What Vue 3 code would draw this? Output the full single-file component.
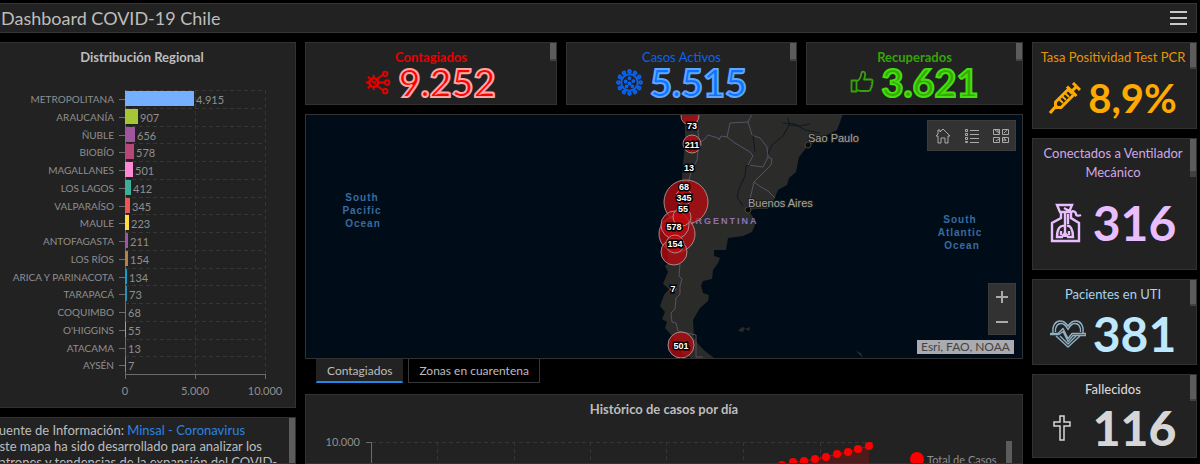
<template>
  <div class="dashboard">
    <header class="topbar">
      <h1>Dashboard COVID-19 Chile</h1>
      <button type="button" class="menu" aria-label="Menú">
        <svg width="18" height="16" viewBox="0 0 18 16">
          <path d="M0 2h17M0 8h17M0 14h17" stroke="#c8c8c8" stroke-width="2" />
        </svg>
      </button>
    </header>

    <main class="columns">
      <!-- left -->
      <div class="column left">
        <section class="panel regional">
          <h2>Distribución Regional</h2>
          <svg class="bars" width="308" height="326" viewBox="0 0 308 326">
            <g class="grid">
              <path v-for="(r, i) in regions" :key="r.name" :d="`M137 ${rowTop(i)}h140`" />
              <path d="M207 17v284M277 17v284" />
            </g>
            <path class="axis" d="M137 17v289M137 301h140M207 301v5M277 301v5" />
            <g v-for="(r, i) in regions" :key="r.name">
              <path class="axis" :d="`M131 ${rowTop(i) + 9}h6`" />
              <rect x="137" :y="rowTop(i) + 1" :width="barWidth(r)" height="15" :fill="r.color" />
              <text class="name" x="126" :y="rowTop(i) + 13" text-anchor="end">{{ r.name }}</text>
              <text :x="139 + barWidth(r)" :y="rowTop(i) + 14">{{ r.label }}</text>
            </g>
            <text x="137" y="322" text-anchor="middle">0</text>
            <text x="207" y="322" text-anchor="middle">5.000</text>
            <text x="277" y="322" text-anchor="middle">10.000</text>
          </svg>
        </section>

        <section class="panel about scroll">
          <p>
            Fuente de Información: <a href="#">Minsal - Coronavirus</a><br />
            Este mapa ha sido desarrollado para analizar los<br />
            patrones y tendencias de la expansión del COVID-
          </p>
        </section>
      </div>

      <!-- center -->
      <div class="column center">
        <div class="cards">
          <section class="panel card scroll infected">
            <h2>Contagiados</h2>
            <div class="figure">
              <svg width="25" height="25" viewBox="0 0 26 26" fill="none" stroke="currentColor" stroke-width="2">
                <circle cx="8" cy="13" r="4.5" stroke-width="2.500" />
                <path d="M8 8V5M8 18v3M3 13H0M4 9 2 7M4 17l-2 2M12 9l6-4M13 13h6M12 17l6 4M6 11l4 4M10 11v2" />
                <circle cx="20" cy="4" r="2.3" />
                <circle cx="22" cy="13" r="2.3" />
                <circle cx="20" cy="22" r="2.3" />
              </svg>
              <strong>9.252</strong>
            </div>
          </section>
          <section class="panel card scroll active">
            <h2>Casos Activos</h2>
            <div class="figure">
              <svg width="27" height="27" viewBox="0 0 28 28" fill="none" stroke="currentColor" stroke-width="2">
                <circle cx="14" cy="14" r="8.5" />
                <circle
                  v-for="n in 12"
                  :key="n"
                  cx="14"
                  cy="2.5"
                  r="1.4"
                  :transform="`rotate(${n * 30} 14 14)`"
                />
                <circle cx="14" cy="9.5" r="1" />
                <circle cx="10" cy="13" r="1" />
                <circle cx="18" cy="12.5" r="1" />
                <circle cx="14" cy="15" r="1" />
                <circle cx="11" cy="18" r="1" />
                <circle cx="17" cy="18" r="1" />
              </svg>
              <strong>5.515</strong>
            </div>
          </section>
          <section class="panel card scroll recovered">
            <h2>Recuperados</h2>
            <div class="figure">
              <svg width="24" height="24" viewBox="0 0 24 24" fill="none" stroke="currentColor" stroke-width="1.8" stroke-linejoin="round">
                <path d="M1.5 10.500h5v11h-5zM6.500 11.500c3-1.500 4.500-4 5-8.500.3-2 3.500-2 3.700 1 .1 2-.5 3.500-1.200 5.500h7c2 0 2 2.500.8 3 1 .8.8 2.500-.4 3 .6.8.4 2.300-.8 2.700.4 1.500-.6 2.800-2.600 2.800H11c-2 0-3-.8-4.500-1" />
              </svg>
              <strong>3.621</strong>
            </div>
          </section>
        </div>

        <section class="panel map">
          <svg class="canvas" viewBox="1 1 716 243" preserveAspectRatio="xMidYMid slice">
            <path class="land" d="M377 0 380 12 380 30 378 50 377 64 374 85 369 105 362 120 363 149 360 152 363 158 360 165 358 170 364 175 359 181 355 192 360 198 357 205 362 208 360 214 367 222 372 232 378 240 386 244H409L400 237 393 230 389 223 388 206 395 194 403 187 404 181 398 179 396 172 398 167 407 165 408 156 413 149 415 144 409 142V136L421 136 423 124 438 122 447 118 450 111 448 103 443 96 452 95 463 95 469 86 473 76 482 71 484 64 491 58 494 43 502 33 518 23 532 16 538 0Z" />
            <path class="land" d="m433 217 4-4 3 1-2 4zM440 215l5-2-1 4zM551 237l5 2 2 5-4-4z" />
            <g class="borders">
              <path d="M392 0 393 16 394 28 392 46 386 58 383 70" />
              <path d="M394 29 400 25 403 21 413 24 414 26 416 22 422 23 430 29 445 38 448 42 443 51 458 53 463 43 462 33 455 24 447 21 443 8 425 9 422 23M443 8 447 0M463 43 467 45 466 51 449 68 445 85M449 68 456 73 463 77 470 84" />
              <path d="M375 150 374 162 377 165 375 172 375 180 371 184 370 195 366 199 367 208 371 209 373 217 382 219 391 221M391 221V243H398" />
            </g>
            <path class="river" d="M445 51 441 52 440 62 434 75 432 83 438 92M463 40 467 31 478 22 484 11 495 12 505 10M448 21 450 38M484 11 483 4M478 9 490 10 500 16 515 19" />
            <text class="country" x="382" y="110">ARGENTINA</text>
            <circle v-for="(c, i) in circles" :key="i" class="bubble" :cx="c[0]" :cy="c[1]" :r="c[2]" />
            <circle class="city-dot" cx="503" cy="31" r="3" />
            <text class="city" x="503" y="28">Sao Paulo</text>
            <circle class="city-dot" cx="443" cy="96" r="3" />
            <text class="city" x="443" y="93">Buenos Aires</text>
            <g class="ocean">
              <text x="57" y="87">South</text>
              <text x="57" y="100">Pacific</text>
              <text x="58" y="113">Ocean</text>
              <text x="655" y="109">South</text>
              <text x="655" y="122">Atlantic</text>
              <text x="657" y="135">Ocean</text>
            </g>
            <text v-for="c in counts" :key="c.n" class="count" :x="c.x" :y="c.y">{{ c.n }}</text>
          </svg>
          <div class="tools">
            <button type="button" aria-label="Inicio">
              <svg width="16" height="16" viewBox="0 0 16 16">
                <path d="M1 8 3 6V2h2v2l3-3 7 7h-2v7h-3v-5H6v5H3V8z" />
              </svg>
            </button>
            <button type="button" aria-label="Leyenda">
              <svg width="16" height="16" viewBox="0 0 16 16">
                <path d="M6 2.500h9M6 6.500h9M6 10.500h9M6 14.500h9" />
                <path d="M1.500 1.500h2v2h-2zM1.500 5.500h2v2h-2zM1.500 9.500h2v2h-2zM1.500 13.500h2v1h-2z" />
              </svg>
            </button>
            <button type="button" aria-label="Mapa base">
              <svg width="16" height="16" viewBox="0 0 16 16">
                <path d="M.5 1.500h6v5h-6zM9.500 1.500h6v5h-6zM.5 9.500h6v5h-6zM9.500 9.500h6v5h-6zM2 2l4 3M11 5l3-3M3 13l3-2M11 10l2 3M5 2v2M10 12h3" />
              </svg>
            </button>
          </div>
          <div class="zoom">
            <button type="button" aria-label="Acercar">
              <svg width="12" height="12" viewBox="0 0 12 12"><path d="M0 6h12M6 0v12" /></svg>
            </button>
            <button type="button" aria-label="Alejar">
              <svg width="12" height="12" viewBox="0 0 12 12"><path d="M0 6h12" /></svg>
            </button>
          </div>
          <div class="attribution">Esri, FAO, NOAA</div>
        </section>

        <nav class="tabs">
          <button
            v-for="t in tabs"
            :key="t"
            type="button"
            :class="{ selected: t === tab }"
            @click="tab = t"
          >
            {{ t }}
          </button>
        </nav>

        <section class="panel history">
          <h2>Histórico de casos por día</h2>
          <div class="history-body">
            <svg class="line" viewBox="0 0 604 60" preserveAspectRatio="xMinYMin meet">
              <g class="grid">
                <path d="M66 23h504M131 23v37M208 23v37M284 23v37M360 23v37M437 23v37M514 23v37" />
              </g>
              <path class="axis" d="M60 23h6M65 23v37" />
              <text x="54" y="27" text-anchor="end">10.000</text>
              <path class="area" :d="`M${linePoints} L563 60 L465 60Z`" />
              <path class="trend" :d="`M${linePoints}`" />
              <circle v-for="p in points" :key="p[0]" :cx="p[0]" :cy="p[1]" r="4" fill="#f00" />
            </svg>
            <div class="legend"><i></i>Total de Casos</div>
          </div>
        </section>
      </div>

      <!-- right -->
      <div class="column right">
        <section class="panel stat scroll pcr">
          <h2>Tasa Positividad Test PCR</h2>
          <div class="figure">
            <svg width="32" height="32" viewBox="0 0 32 32" fill="none" stroke="currentColor" stroke-width="3">
              <path d="M1 31l7-8M6.500 25.500V20L20 6.500l5.500 5.500L12 25.500zM18 4.500l9.500 9.500M23.500 8.500l4-4M24 1l7 7" />
              <path d="M10 17l4 4M13 14l4 4M16 11l4 4M19 8l4 4" stroke-width="1.800" />
            </svg>
            <strong>8,9%</strong>
          </div>
        </section>
        <section class="panel stat scroll ventilator">
          <h2>Conectados a Ventilador Mecánico</h2>
          <div class="figure">
            <svg width="32" height="40" viewBox="0 0 32 40" fill="none" stroke="currentColor" stroke-width="2.400">
              <path d="M7 2h15l-3 7h-9zM11 9v6L2 20v18h27V20l-8-5v-4M15 8v26M18 11v10M21 11c0-5 5-2 5 0s3 2 5 1M14 5l7 4" />
              <path d="M14 23c-4-1-7 3-7 11h5l3-4 3 4h5c0-8-3-12-6-11M11 28v4M19 28v4" />
            </svg>
            <strong>316</strong>
          </div>
        </section>
        <section class="panel stat scroll icu">
          <h2>Pacientes en UTI</h2>
          <div class="figure">
            <svg width="36" height="28" viewBox="0 0 36 28" fill="none" stroke="#8eb0c4" stroke-width="1.400" stroke-linejoin="round">
              <path d="M3 13C2 5 6 1 10 1c4 0 6 2 8 5 2-3 4-5 8-5 4 0 8 4 7 12M5.500 12C5 6 8 3.500 11 3.500c3 0 5 2 7 6 2-4 4-6 7-6 3 0 6 2.500 5.500 8.500M6 16l12 11 12-11M10 16l8 8 8-8" />
              <path d="M0 13.500h8l5-5 5 10 4-5h14v2H23l-5 6-5-10-4 3H0z" />
            </svg>
            <strong>381</strong>
          </div>
        </section>
        <section class="panel stat scroll deaths">
          <h2>Fallecidos</h2>
          <div class="figure">
            <svg width="32" height="28" viewBox="0 0 32 28" fill="none" stroke="currentColor" stroke-width="1.500">
              <path d="M10 2h4v6h6v4h-6v14h-4V12H4V8h6z" />
            </svg>
            <strong>116</strong>
          </div>
        </section>
      </div>
    </main>
  </div>
</template>

<script setup>
import { computed, ref } from "vue";

const regions = [
  { name: "METROPOLITANA", value: 4915, label: "4.915", color: "#74b0ff" },
  { name: "ARAUCANÍA", value: 907, label: "907", color: "#a5c736" },
  { name: "ÑUBLE", value: 656, label: "656", color: "#a0559f" },
  { name: "BIOBÍO", value: 578, label: "578", color: "#b64777" },
  { name: "MAGALLANES", value: 501, label: "501", color: "#fb89d6" },
  { name: "LOS LAGOS", value: 412, label: "412", color: "#3caf99" },
  { name: "VALPARAÍSO", value: 345, label: "345", color: "#f05555" },
  { name: "MAULE", value: 223, label: "223", color: "#ffde3e" },
  { name: "ANTOFAGASTA", value: 211, label: "211", color: "#a0559f" },
  { name: "LOS RÍOS", value: 154, label: "154", color: "#b68346" },
  { name: "ARICA Y PARINACOTA", value: 134, label: "134", color: "#149ece" },
  { name: "TARAPACÁ", value: 73, label: "73", color: "#2b8fb5" },
  { name: "COQUIMBO", value: 68, label: "68", color: "#6a6bc4" },
  { name: "O'HIGGINS", value: 55, label: "55", color: "#9cb733" },
  { name: "ATACAMA", value: 13, label: "13", color: "#a8505c" },
  { name: "AYSÉN", value: 7, label: "7", color: "#888888" },
];

const rowTop = (i) => 17 + Math.round((i * 284) / 16);
const barWidth = (r) => Math.max(1, Math.ceil((r.value * 140) / 10000));

// x, y, radio
const circles = [
  [385, 2, 9],
  [387, 30, 9],
  [381, 88, 22],
  [379, 83, 8],
  [372, 120, 18],
  [370, 111, 14],
  [377, 103, 9],
  [369, 138, 13],
  [370, 130, 9],
  [368, 174, 3],
  [376, 231, 13],
];

const counts = [
  { n: "73", x: 387, y: 15 },
  { n: "211", x: 387, y: 34 },
  { n: "13", x: 384, y: 57 },
  { n: "68", x: 379, y: 76 },
  { n: "345", x: 379, y: 87 },
  { n: "55", x: 378, y: 98 },
  { n: "578", x: 369, y: 116 },
  { n: "154", x: 370, y: 133 },
  { n: "7", x: 368, y: 178 },
  { n: "501", x: 376, y: 235 },
];

const tabs = ["Contagiados", "Zonas en cuarentena"];
const tab = ref("Contagiados");

const points = [
  [465, 48],
  [476, 46],
  [487, 43],
  [498, 42],
  [509, 40],
  [520, 38],
  [531, 35],
  [542, 33],
  [552, 30],
  [563, 27],
];
const linePoints = computed(() => points.map((p) => p.join(" ")).join(" L"));
</script>

<style>
body {
  background: #000;
}
</style>

<style scoped>
.dashboard {
  display: flex;
  flex-direction: column;
  gap: 9px;
  height: 100vh;
  padding: 3px 3px 0 0;
  box-sizing: border-box;
  overflow: hidden;
  background: #000;
  color: #bdbdbd;
  font-family: Lato, "Open Sans", sans-serif;
  font-size: 13px;
}

h1,
h2,
p {
  margin: 0;
}

button {
  padding: 0;
  border: 0;
  background: none;
  font: inherit;
  color: inherit;
  cursor: pointer;
}

svg {
  display: block;
  flex: none;
}

.topbar {
  display: flex;
  align-items: center;
  justify-content: space-between;
  flex: none;
  height: 30px;
  box-sizing: border-box;
  padding: 0 8px 0 1px;
  background: #222;
  border: 1px solid #363636;
  border-left: 0;
}

.topbar h1 {
  font-size: 18px;
  font-weight: 400;
}

.columns {
  display: grid;
  grid-template-columns: 308px 1fr 165px;
  gap: 9px;
  flex: 1;
  min-height: 0;
  margin-left: -12px;
}

.column {
  display: flex;
  flex-direction: column;
  gap: 9px;
  min-width: 0;
  min-height: 0;
}

.panel {
  position: relative;
  box-sizing: border-box;
  background: #222;
  border: 1px solid #323232;
  overflow: hidden;
}

.panel h2 {
  font-size: 13px;
  line-height: 19px;
  text-align: center;
}

.scroll::after {
  content: "";
  position: absolute;
  top: 0;
  right: 0;
  width: 6px;
  height: 24px;
  background: #5c5c5c;
  border-bottom: 2px solid #424242;
}

/* left */
.regional {
  flex: none;
  padding: 5px 0 8px;
}

.bars {
  margin: 6px 0 0 -1px;
}

.bars text,
.line text {
  fill: #8f8f8f;
  font-size: 11px;
}

.bars .name {
  font-size: 10px;
}

.grid path {
  fill: none;
  stroke: #363636;
  stroke-dasharray: 4 3;
  shape-rendering: crispEdges;
}

.axis {
  fill: none;
  stroke: #6b6b6b;
  shape-rendering: crispEdges;
}

.about {
  flex: 1;
  padding: 4px 3px;
  line-height: 16px;
  white-space: nowrap;
}

.about a {
  color: #2a84e2;
  text-decoration: none;
}

.about.scroll::after {
  height: 60px;
}

/* center */
.cards {
  display: grid;
  grid-template-columns: 252fr 231fr 217fr;
  gap: 9px;
  flex: none;
}

.card {
  height: 63px;
  padding-top: 7px;
}

.card.scroll::after {
  height: 16px;
}

.card h2 {
  height: 14px;
  line-height: 14px;
  overflow: hidden;
}

.figure {
  display: flex;
  align-items: center;
  justify-content: center;
  gap: 7px;
}

.card .figure {
  height: 36px;
}

.card strong {
  font-size: 38px;
  line-height: 36px;
  -webkit-text-stroke: 2px;
}

.infected {
  color: #e80000;
}
.infected strong {
  color: #f00;
  -webkit-text-stroke-color: #ffa6a6;
}
.active {
  color: #0a63ee;
}
.active h2 {
  font-weight: 400;
}
.active strong {
  color: #0a73ff;
  -webkit-text-stroke-color: #60a5ff;
}
.recovered {
  color: #37a308;
}
.recovered strong {
  color: #38a800;
  -webkit-text-stroke-color: #42e010;
}

.map {
  flex: none;
  height: 245px;
  background: #000d18;
}

.canvas {
  width: 100%;
  height: 100%;
}

.land {
  fill: #2b2b29;
}

.borders {
  fill: none;
  stroke: #595166;
}

.river {
  fill: none;
  stroke: #0e1724;
}

.bubble {
  fill: rgba(190, 10, 15, 0.75);
  stroke: #a58a8a;
}

.canvas text {
  font-family: "Liberation Sans", Arial, sans-serif;
}

.canvas .city {
  fill: #a4a4a0;
  font-size: 11px;
  paint-order: stroke;
  stroke: #1c1c1c;
  stroke-width: 2px;
}

.city-dot {
  fill: #0b0b08;
  stroke: #45453c;
}

.canvas .country {
  fill: #8f72b3;
  font-size: 9px;
  font-weight: bold;
  letter-spacing: 2px;
}

.ocean text {
  fill: #3a6aa0;
  font-size: 10px;
  font-weight: bold;
  letter-spacing: 1px;
  text-anchor: middle;
}

.canvas .count {
  fill: #fff;
  font-size: 9px;
  font-weight: bold;
  text-anchor: middle;
  paint-order: stroke;
  stroke: #000;
  stroke-width: 3px;
}

.tools,
.zoom {
  position: absolute;
  right: 6px;
  display: flex;
  background: #323232;
  border: 1px solid #3c3c3c;
}

.tools {
  top: 5px;
}

.tools button {
  display: grid;
  place-items: center;
  width: 29px;
  height: 29px;
}

.tools path,
.zoom path {
  fill: none;
  stroke: #aaa;
}

.zoom path {
  stroke-width: 2px;
}

.zoom {
  bottom: 23px;
  flex-direction: column;
}

.zoom button {
  display: grid;
  place-items: center;
  width: 26px;
  height: 25px;
}

.attribution {
  position: absolute;
  right: 8px;
  bottom: 4px;
  padding: 0 4px;
  background: #a9abb0;
  color: #444;
  font-size: 12px;
  line-height: 14px;
}

.tabs {
  display: flex;
  gap: 5px;
  flex: none;
  margin: -9px 0 2px;
  padding-left: 11px;
}

.tabs button {
  height: 24px;
  padding: 0 10px;
  border: 1px solid #383838;
  border-top: 0;
  font-size: 12px;
}

.tabs .selected {
  background: #222;
  border-color: #222;
  border-bottom: 2px solid #2187e8;
}

.history {
  flex: 1;
  padding-top: 5px;
}

.history-body {
  display: flex;
}

.line {
  flex: 604 1 0;
  min-width: 0;
}

.area {
  fill: rgba(255, 0, 0, 0.2);
}

.trend {
  fill: none;
  stroke: #d00000;
}

.legend {
  position: relative;
  display: flex;
  flex: 112 1 0;
  align-items: center;
  gap: 3px;
  height: 60px;
  margin-top: 10px;
  color: #8f8f8f;
  font-size: 11px;
  white-space: nowrap;
}

.legend i {
  width: 14px;
  height: 14px;
  border-radius: 50%;
  background: #f00;
}

.legend::after {
  content: "";
  position: absolute;
  top: 12px;
  right: 10px;
  width: 6px;
  height: 60px;
  background: #5c5c5c;
}

/* right */
.stat {
  display: flex;
  flex-direction: column;
  flex: none;
  padding: 5px 3px 0 0;
}

.stat .figure {
  flex: 1;
}

.stat h2 {
  font-weight: 400;
}

.stat strong {
  font-size: 48px;
  line-height: 48px;
}

.pcr {
  height: 87px;
  color: #ffaa00;
}
.pcr h2 {
  color: #e29508;
}
.pcr strong {
  font-size: 40px;
}
.ventilator {
  height: 132px;
  padding-bottom: 6px;
  color: #e8beff;
}
.ventilator h2 {
  color: #d0a8e6;
}
.ventilator.scroll::after {
  height: 32px;
  border-bottom-width: 6px;
}
.ventilator .figure {
  gap: 11px;
}
.icu {
  height: 86px;
  color: #bee8ff;
}
.icu h2 {
  color: #a9d3ea;
}
.deaths {
  height: 84px;
  color: #d6d6d6;
}
.deaths .figure {
  gap: 11px;
}
.deaths h2 {
  font-weight: 500;
}
.deaths strong {
  font-weight: 900;
}
</style>
